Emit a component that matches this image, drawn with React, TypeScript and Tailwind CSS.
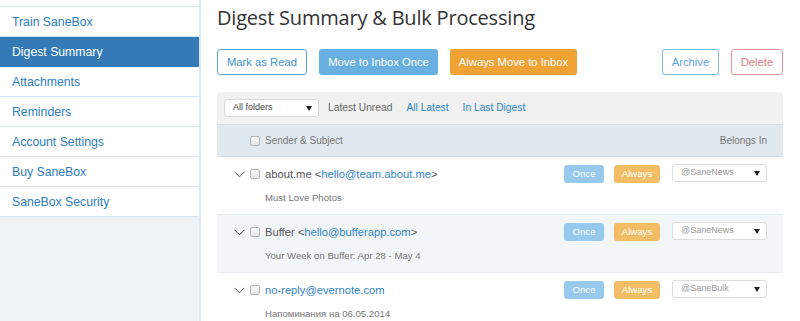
import React from 'react';

const navItems = ['Train SaneBox', 'Digest Summary', 'Attachments', 'Reminders', 'Account Settings', 'Buy SaneBox', 'SaneBox Security'];

type Row = { name?: string; email: string; subject: string; folder: string; shaded?: boolean };

const rows: Row[] = [
    { name: 'about.me', email: 'hello@team.about.me', subject: 'Must Love Photos', folder: '@SaneNews' },
    { name: 'Buffer', email: 'hello@bufferapp.com', subject: 'Your Week on Buffer: Apr 28 - May 4', folder: '@SaneNews', shaded: true },
    { email: 'no-reply@evernote.com', subject: 'Напоминания на 06.05.2014', folder: '@SaneBulk' },
];

const Box: React.FC = () => (
    <span className="inline-block w-[10px] h-[10px] rounded-[2px] border border-[#b5b5b5] bg-gradient-to-b from-[#fbfbfb] to-[#e4e4e4] shrink-0" />
);

const Chevron: React.FC = () => (
    <svg width="11" height="7" viewBox="0 0 11 7" className="shrink-0">
        <polyline points="0.5,0.8 5.5,5.8 10.5,0.8" fill="none" stroke="#555" strokeWidth="1" />
    </svg>
);

const Caret: React.FC = () => (
    <svg width="6" height="5" viewBox="0 0 6 5">
        <polygon points="0,0 6,0 3,5" fill="#222" />
    </svg>
);

const App: React.FC = () => {
    return (
        <div className="flex w-[800px] h-[321px] overflow-hidden bg-white [font-family:'Liberation_Sans',Arial,sans-serif]">
            {/* Sidebar */}
            <div className="w-[201px] shrink-0 bg-[#eef3f7] border-r-2 border-[#dde8f1]">
                <div className="h-[7px] bg-white border-b border-[#d3e3f0]" />
                {navItems.map(item => (
                    <div
                        key={item}
                        className={`h-[30px] pl-[12px] pt-[1px] flex items-center text-[12.25px] border-b ${item === 'Digest Summary' ? 'bg-[#337ab7] text-white border-[#337ab7]' : 'bg-white text-[#2d7dbf] border-[#d3e3f0]'}`}
                    >
                        {item}
                    </div>
                ))}
            </div>

            {/* Main */}
            <div className="flex-1 pl-[16px] pr-[17px]">
                <h1 className="mt-[4px] text-[20px] leading-[28px] text-[#333] [font-family:'Open_Sans',sans-serif] tracking-[-0.2px]">
                    Digest Summary &amp; Bulk Processing
                </h1>

                <div className="mt-[17px] flex items-center h-[26px] text-[11.25px]">
                    <button className="w-[90px] h-[26px] rounded-[3px] border border-[#5aa3d9] text-[#3d8fcf] bg-white">Mark as Read</button>
                    <button className="ml-[12px] w-[119px] h-[26px] rounded-[3px] bg-[#68b0e2] text-white">Move to Inbox Once</button>
                    <button className="ml-[12px] w-[127px] h-[26px] rounded-[3px] bg-[#f0a234] text-white">Always Move to Inbox</button>
                    <button className="ml-auto w-[57px] h-[26px] rounded-[3px] border border-[#7bbbe6] text-[#5ba6da] bg-white">Archive</button>
                    <button className="ml-[12px] w-[52px] h-[26px] rounded-[3px] border border-[#e39595] text-[#dc7d7d] bg-white">Delete</button>
                </div>

                <div className="mt-[17px] rounded-t-[4px] overflow-hidden">
                    <div className="h-[32px] bg-[#f1f1f1] flex items-center pl-[7px] text-[10.25px]">
                        <div className="w-[95px] h-[18px] bg-white border border-[#d8d8d8] rounded-[3px] flex items-center justify-between pl-[8px] pr-[6px] text-[9px] text-[#444]">
                            <span>All folders</span>
                            <Caret />
                        </div>
                        <span className="ml-[9px] text-[#666]">Latest Unread</span>
                        <span className="ml-[14px] text-[#2f84c6]">All Latest</span>
                        <span className="ml-[14px] text-[#2f84c6]">In Last Digest</span>
                    </div>
                    <div className="h-[33px] bg-[#e1e9f0] border-t border-b border-[#cfdde9] flex items-center pl-[33px] pr-[16px] text-[10px] text-[#777]">
                        <Box />
                        <span className="ml-[5px]">Sender &amp; Subject</span>
                        <span className="ml-auto">Belongs In</span>
                    </div>
                    {rows.map(row => (
                        <div
                            key={row.email}
                            className={`h-[58px] border-b border-[#e6ecf1] flex ${row.shaded ? 'bg-[#f3f6f9]' : 'bg-white'}`}
                        >
                            <div className="flex-1 pl-[17px]">
                                <div className="h-[34px] flex items-center text-[11.2px] text-[#555]">
                                    <Chevron />
                                    <span className="ml-[5px] flex"><Box /></span>
                                    <span className="ml-[5px]">
                                        {row.name ? (
                                            <>
                                                {row.name} &lt;<span className="text-[#2f84c6]">{row.email}</span>&gt;
                                            </>
                                        ) : (
                                            <span className="text-[#2f84c6]">{row.email}</span>
                                        )}
                                    </span>
                                </div>
                                <div className="pl-[31px] text-[9.6px] text-[#777] leading-[14px]">{row.subject}</div>
                            </div>
                            <div className="flex items-start pt-[8px] pr-[16px] gap-[10px]">
                                <span className="w-[40px] h-[18px] rounded-[3px] bg-[#97c9ec] text-white text-[9.6px] flex items-center justify-center">Once</span>
                                <span className="w-[46px] h-[18px] rounded-[3px] bg-[#f3bd66] text-white text-[9.6px] flex items-center justify-center">Always</span>
                                <div className="ml-[2px] -mt-[1px] w-[95px] h-[18px] bg-white border border-[#dcdcdc] rounded-[3px] flex items-center justify-between pl-[8px] pr-[6px] text-[9px] text-[#999]">
                                    <span>{row.folder}</span>
                                    <Caret />
                                </div>
                            </div>
                        </div>
                    ))}
                </div>
            </div>
        </div>
    );
};

export default App;
